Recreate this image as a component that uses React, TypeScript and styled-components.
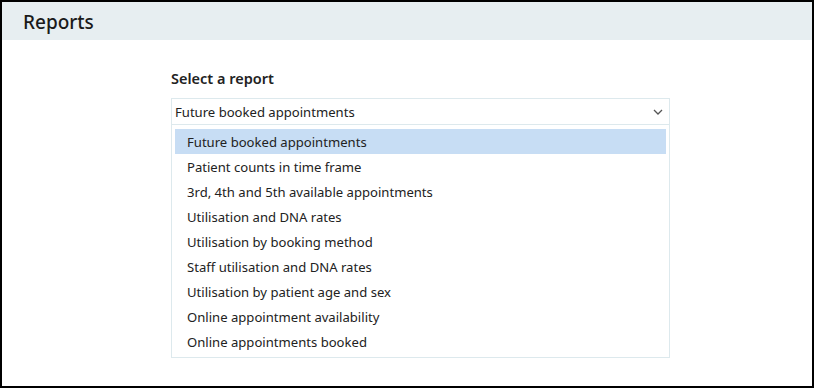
import React, { useState } from 'react'
import styled, { createGlobalStyle } from 'styled-components'

const GlobalStyles = createGlobalStyle`
  html, body {
    margin: 0;
    padding: 0;
    background: #000000;
  }
  body {
    font-family: "Noto Sans", "Open Sans", sans-serif;
  }
`

// STYLES
const Frame = styled.div`
  box-sizing: border-box;
  width: 814px;
  height: 388px;
  border: 2px solid #000000;
  background: #ffffff;
  display: flex;
  flex-direction: column;
  overflow: hidden;
`

const Header = styled.header`
  background: #e7eef1;
  height: 38px;
  display: flex;
  align-items: center;
  padding-left: 21px;

  h1 {
    margin: 0;
    font-size: 19px;
    font-weight: 500;
    color: #1a1a1a;
    position: relative;
    top: 1px;
  }
`

const Main = styled.main`
  padding: 28px 0 0 169px;
`

const Field = styled.div`
  width: 499px;
  display: flex;
  flex-direction: column;
`

const Label = styled.label`
  font-size: 14.5px;
  font-weight: 600;
  color: #222222;
  margin-bottom: 10px;
`

const SelectBox = styled.div`
  box-sizing: border-box;
  height: 27px;
  border: 1px solid #dde9ed;
  display: flex;
  align-items: center;
  justify-content: space-between;
  padding: 0 6px 0 3px;
  font-size: 13.1px;
  color: #222222;
`

const Options = styled.ul`
  list-style: none;
  margin: 0;
  padding: 4px 3px 3px;
  border: 1px solid #dde9ed;
  border-top: 0;
`

const Option = styled.li<{ $selected: boolean }>`
  height: 25px;
  display: flex;
  align-items: center;
  padding-left: 12px;
  font-size: 13.1px;
  color: #222222;
  background: ${props => props.$selected ? '#c7ddf4' : 'transparent'};
`

const reports = [
  'Future booked appointments',
  'Patient counts in time frame',
  '3rd, 4th and 5th available appointments',
  'Utilisation and DNA rates',
  'Utilisation by booking method',
  'Staff utilisation and DNA rates',
  'Utilisation by patient age and sex',
  'Online appointment availability',
  'Online appointments booked'
]

const Chevron = () => (
  <svg width="10" height="6" viewBox="0 0 10 6">
    <path d="M1 1 L5 5 L9 1" fill="none" stroke="#555555" strokeWidth="1.3" />
  </svg>
)

const App = () => {
  const [selected, setSelected] = useState(reports[0])

  return (
    <>
      <GlobalStyles />
      <Frame>
        <Header>
          <h1>Reports</h1>
        </Header>
        <Main>
          <Field>
            <Label>Select a report</Label>
            <SelectBox>
              <span>{selected}</span>
              <Chevron />
            </SelectBox>
            <Options>
              {reports.map(r => (
                <Option key={r} $selected={r === selected} onClick={() => setSelected(r)}>{r}</Option>
              ))}
            </Options>
          </Field>
        </Main>
      </Frame>
    </>
  )
}

export default App
